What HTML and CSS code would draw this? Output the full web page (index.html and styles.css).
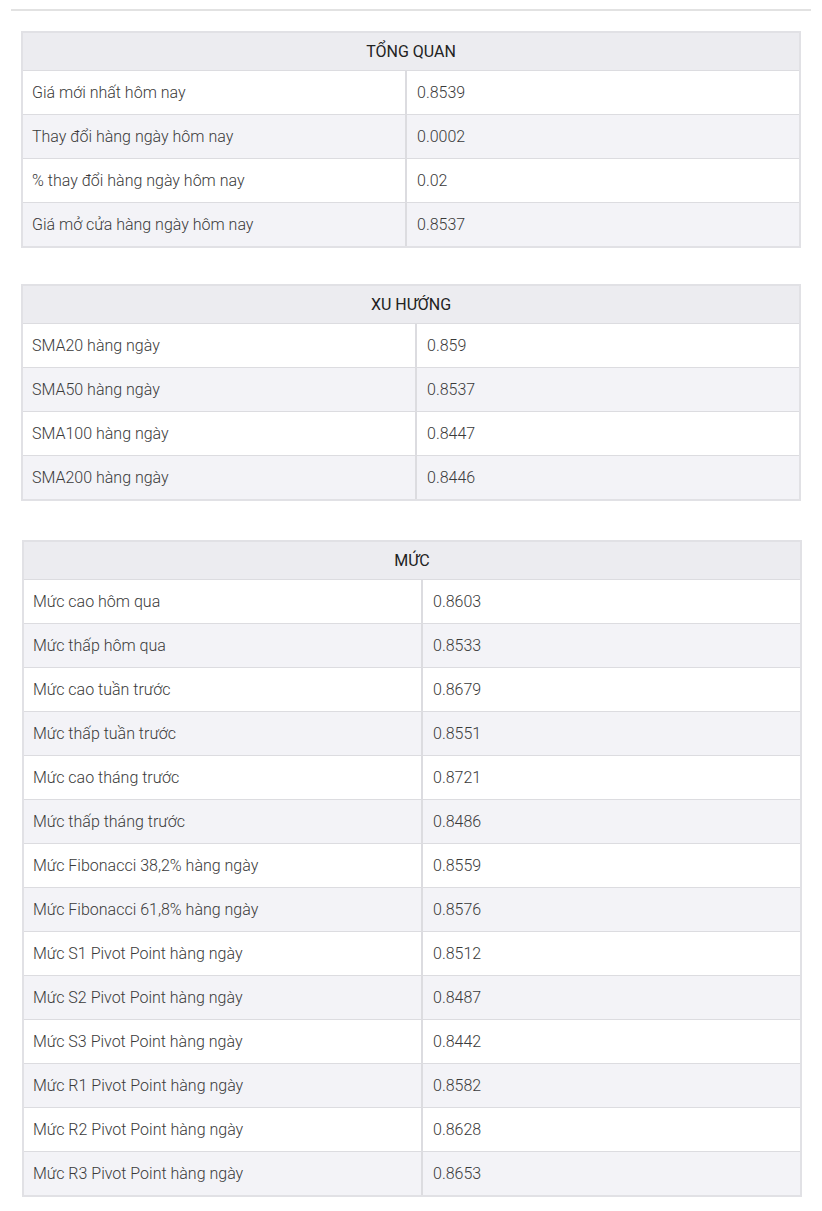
FILE: index.html
```html
<!DOCTYPE html>
<html lang="vi">
<head>
<meta charset="utf-8">
<title>Tổng quan</title>
<link rel="stylesheet" href="styles.css">
</head>
<body>
<div class="rule"></div>

<table class="tbl t1">
  <colgroup><col class="ck"><col></colgroup>
  <thead><tr><th colspan="2">TỔNG QUAN</th></tr></thead>
  <tbody>
    <tr><td class="k">Giá mới nhất hôm nay</td><td>0.8539</td></tr>
    <tr><td class="k">Thay đổi hàng ngày hôm nay</td><td>0.0002</td></tr>
    <tr><td class="k">% thay đổi hàng ngày hôm nay</td><td>0.02</td></tr>
    <tr><td class="k">Giá mở cửa hàng ngày hôm nay</td><td>0.8537</td></tr>
  </tbody>
</table>

<table class="tbl t2">
  <colgroup><col class="ck"><col></colgroup>
  <thead><tr><th colspan="2">XU HƯỚNG</th></tr></thead>
  <tbody>
    <tr><td class="k">SMA20 hàng ngày</td><td>0.859</td></tr>
    <tr><td class="k">SMA50 hàng ngày</td><td>0.8537</td></tr>
    <tr><td class="k">SMA100 hàng ngày</td><td>0.8447</td></tr>
    <tr><td class="k">SMA200 hàng ngày</td><td>0.8446</td></tr>
  </tbody>
</table>

<table class="tbl t3">
  <colgroup><col class="ck"><col></colgroup>
  <thead><tr><th colspan="2">MỨC</th></tr></thead>
  <tbody>
    <tr><td class="k">Mức cao hôm qua</td><td>0.8603</td></tr>
    <tr><td class="k">Mức thấp hôm qua</td><td>0.8533</td></tr>
    <tr><td class="k">Mức cao tuần trước</td><td>0.8679</td></tr>
    <tr><td class="k">Mức thấp tuần trước</td><td>0.8551</td></tr>
    <tr><td class="k">Mức cao tháng trước</td><td>0.8721</td></tr>
    <tr><td class="k">Mức thấp tháng trước</td><td>0.8486</td></tr>
    <tr><td class="k">Mức Fibonacci 38,2% hàng ngày</td><td>0.8559</td></tr>
    <tr><td class="k">Mức Fibonacci 61,8% hàng ngày</td><td>0.8576</td></tr>
    <tr><td class="k">Mức S1 Pivot Point hàng ngày</td><td>0.8512</td></tr>
    <tr><td class="k">Mức S2 Pivot Point hàng ngày</td><td>0.8487</td></tr>
    <tr><td class="k">Mức S3 Pivot Point hàng ngày</td><td>0.8442</td></tr>
    <tr><td class="k">Mức R1 Pivot Point hàng ngày</td><td>0.8582</td></tr>
    <tr><td class="k">Mức R2 Pivot Point hàng ngày</td><td>0.8628</td></tr>
    <tr><td class="k">Mức R3 Pivot Point hàng ngày</td><td>0.8653</td></tr>
  </tbody>
</table>
</body>
</html>
```

FILE: styles.css
```css
html, body {
  margin: 0;
  padding: 0;
  background: #ffffff;
}

body {
  font-family: Roboto, "Noto Sans", "Liberation Sans", sans-serif;
  font-size: 16px;
  color: #3a3a3a;
}

.rule {
  height: 2px;
  margin: 9px 11px 0 11px;
  background: #e2e2e2;
}

.tbl {
  border-collapse: separate;
  border-spacing: 0;
  border: 2px solid #e1e1e5;
  width: 780px;
  margin-left: 21px;
  table-layout: fixed;
}

.t1 { margin-top: 20px; }
.t2 { margin-top: 36px; }
.t3 { margin-top: 39px; margin-left: 22px; }

.tbl th {
  box-sizing: border-box;
  height: 38px;
  padding: 0 10px;
  background: #ececf0;
  border-bottom: 1px solid #dcdce0;
  font-weight: 400;
  color: #222222;
  text-align: center;
  vertical-align: middle;
}

.tbl td {
  box-sizing: border-box;
  height: 44px;
  padding: 0 9px 0 9px;
  border-bottom: 1px solid #dcdce0;
  font-weight: 300;
  vertical-align: middle;
  text-align: left;
  white-space: nowrap;
}

.tbl td + td {
  padding-left: 10px;
}

.tbl tr:last-child td {
  border-bottom: 0;
  height: 43px;
}

.tbl tbody tr:nth-child(even) td {
  background: #f3f3f7;
}

.tbl td.k {
  border-right: 2px solid #dcdce0;
}

.t1 .ck { width: 384px; }
.t2 .ck { width: 394px; }
.t3 .ck { width: 399px; }
```
